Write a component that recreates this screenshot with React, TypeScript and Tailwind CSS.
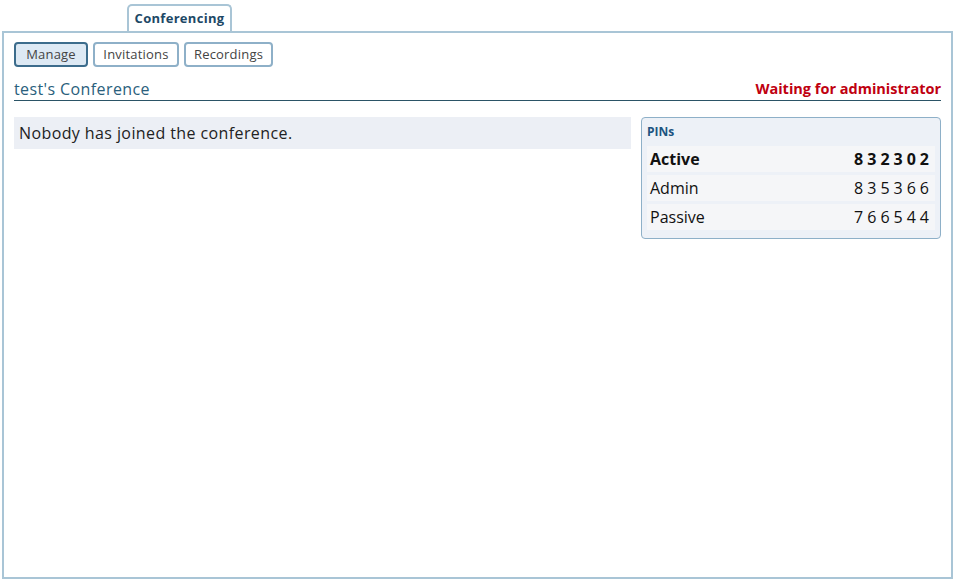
import React from "react";

const FONT = { fontFamily: "'Open Sans', 'DejaVu Sans', sans-serif" };

const BUTTONS = [
  { label: "Manage", active: true, w: "w-[74px]" },
  { label: "Invitations", active: false, w: "w-[86px]" },
  { label: "Recordings", active: false, w: "w-[89px]" },
];

const PINS = [
  { label: "Active", value: "832302", bold: true },
  { label: "Admin", value: "835366", bold: false },
  { label: "Passive", value: "766544", bold: false },
];

export default function App() {
  return (
    <div className="h-[581px] w-[955px] overflow-hidden bg-white" style={FONT}>
      <div className="flex h-[31px] items-end pl-[127px]">
        <div className="flex h-[27px] w-[105px] items-center justify-center rounded-t-[5px] border-2 border-b-0 border-[#a9c5d6] bg-white text-[13px] font-bold tracking-[0.3px] text-[#1d4866]">
          Conferencing
        </div>
      </div>
      <div className="mx-[2px] flex h-[548px] flex-col border-2 border-[#a9c5d6] px-[10px] pt-[9px]">
        {/* sub tabs */}
        <div className="flex gap-[5px]">
          {BUTTONS.map((b) => (
            <div
              key={b.label}
              className={
                "flex h-[25px] items-center justify-center rounded-[4px] border-2 text-[13px] tracking-[0.2px] text-[#444] " +
                b.w +
                (b.active ? " border-[#3c6c8c] bg-[#dde9f4]" : " border-[#8eb0c8] bg-white")
              }
            >
              {b.label}
            </div>
          ))}
        </div>

        {/* heading */}
        <div className="mt-[12px] flex items-end justify-between border-b-[1px] border-[#2b5466] pb-[1px] leading-[20px]">
          <span className="text-[16px] tracking-[0.4px] text-[#2a607c]">test's Conference</span>
          <span className="text-[14.5px] font-bold text-[#c00010]">Waiting for administrator</span>
        </div>

        <div className="mt-[16px] flex gap-[10px]">
          <div className="flex h-[32px] flex-1 items-center bg-[#eceff5] pl-[5px] text-[16px] tracking-[0.4px] text-[#222]">
            Nobody has joined the conference.
          </div>
          <div className="w-[300px] rounded-[4px] border border-[#8eb0c8] bg-[#edf1f7] px-[5px] pb-[8px]">
            <div className="pt-[5px] pb-[5px] text-[12px] leading-[18px] font-bold text-[#1d5480]">PINs</div>
            <div className="flex flex-col gap-[3px]">
              {PINS.map((p) => (
                <div
                  key={p.label}
                  className={
                    "flex h-[26px] items-center justify-between bg-[#f5f6f8] px-[3px] text-[16px] text-[#111]" +
                    (p.bold ? " font-bold" : "")
                  }
                >
                  <span>{p.label}</span>
                  <span className="mr-[-1px] tracking-[4px]">{p.value}</span>
                </div>
              ))}
            </div>
          </div>
        </div>
      </div>
    </div>
  );
}
